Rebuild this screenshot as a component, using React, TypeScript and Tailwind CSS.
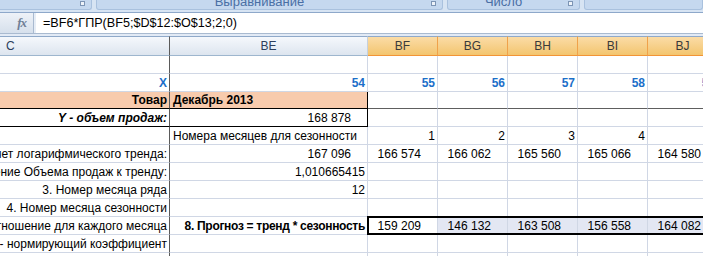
import React from 'react';

type Cell = {
  text?: string;
  align?: 'left' | 'right' | 'fmt';
  cls?: string;
};

const F = "font-['Liberation_Sans',Arial,sans-serif]";

// columns: C (frozen, clipped on the left), BE, BF..BJ
const COLS = ['BF', 'BG', 'BH', 'BI', 'BJ'];

type Row = {
  c?: Cell;
  be?: Cell;
  rest?: (Cell | undefined)[];
  kind?: 'head' | 'box' | 'forecast';
};

const ROWS: Row[] = [
  {},
  {
    c: { text: 'X', align: 'right', cls: 'font-bold text-[#1c6fc9]' },
    be: { text: '54', align: 'right', cls: 'font-bold text-[#1c6fc9]' },
    rest: ['55', '56', '57', '58', '59'].map((t) => ({ text: t, align: 'right' as const, cls: 'font-bold text-[#1c6fc9]' })),
  },
  {
    kind: 'head',
    c: { text: 'Товар', align: 'right', cls: 'font-bold' },
    be: { text: 'Декабрь 2013', align: 'left', cls: 'font-bold' },
  },
  {
    kind: 'box',
    c: { text: 'Y - объем продаж:', align: 'right', cls: 'font-bold italic' },
    be: { text: '168 878', align: 'fmt' },
  },
  {
    be: { text: 'Номера месяцев для сезонности', align: 'left' },
    rest: ['1', '2', '3', '4'].map((t) => ({ text: t, align: 'right' as const })),
  },
  {
    c: { text: '1. Расчет логарифмического тренда:', align: 'right' },
    be: { text: '167 096', align: 'fmt' },
    rest: ['166 574', '166 062', '165 560', '165 066', '164 580'].map((t) => ({ text: t, align: 'fmt' as const })),
  },
  {
    c: { text: '2. Отношение Объема продаж к тренду:', align: 'right' },
    be: { text: '1,010665415', align: 'right' },
  },
  {
    c: { text: '3. Номер месяца ряда', align: 'right' },
    be: { text: '12', align: 'right' },
  },
  {
    c: { text: '4. Номер месяца сезонности', align: 'right' },
  },
  {
    kind: 'forecast',
    c: { text: '5. Среднее отношение для каждого месяца', align: 'right' },
    be: { text: '8. Прогноз = тренд * сезонность', align: 'right', cls: 'font-bold tracking-[-0.3px]' },
    rest: ['159 209', '146 132', '163 508', '156 558', '164 082'].map((t) => ({ text: t, align: 'fmt' as const })),
  },
  {
    c: { text: '7. Kн - нормирующий коэффициент', align: 'right' },
  },
  {},
];

function CellText({ cell }: { cell?: Cell }) {
  if (!cell || !cell.text) return null;
  const pos =
    cell.align === 'left'
      ? 'justify-start pl-[3px]'
      : cell.align === 'fmt'
      ? 'justify-end pr-[16px]'
      : 'justify-end pr-[2px]';
  return (
    <div className={`absolute inset-0 flex items-center ${pos}`}>
      <span className={`shrink-0 whitespace-nowrap ${cell.cls ?? ''}`}>{cell.text}</span>
    </div>
  );
}

function Ribbon() {
  return (
    <div className="h-[13px] bg-[#d7e4f3] border-b border-[#8ea8ca] flex gap-[4px] overflow-hidden">
      <div className="relative w-[97px] -ml-[4px] h-[10px] rounded-b-[3px] bg-[#c5d8ef] border border-t-0 border-[#a9c1de]">
        <div className="absolute right-[6px] top-[1px] w-[5px] h-[5px] border border-[#7d95b5] bg-[#eef3f9]" />
      </div>
      <div className="relative w-[351px] h-[10px] rounded-b-[3px] bg-[#c5d8ef] border border-t-0 border-[#a9c1de] flex justify-center overflow-hidden">
        <span className="text-[13px] leading-none -mt-[5px] pr-[20px] text-[#4a6fa5]">Выравнивание</span>
        <div className="absolute right-[6px] top-[1px] w-[5px] h-[5px] border border-[#7d95b5] bg-[#eef3f9]" />
      </div>
      <div className="relative w-[135px] h-[10px] rounded-b-[3px] bg-[#c5d8ef] border border-t-0 border-[#a9c1de] flex justify-center overflow-hidden">
        <span className="text-[13px] leading-none -mt-[5px] pr-[20px] text-[#4a6fa5]">Число</span>
        <div className="absolute right-[6px] top-[1px] w-[5px] h-[5px] border border-[#7d95b5] bg-[#eef3f9]" />
      </div>
      <div className="w-[120px] h-[10px] rounded-b-[3px] bg-[#c5d8ef] border border-t-0 border-[#a9c1de]" />
    </div>
  );
}

function FormulaBar() {
  return (
    <div className="h-[21px] flex bg-white border-b border-[#a9bad0]">
      <div className="w-[34px] bg-gradient-to-b from-[#eef2f8] to-[#d6e0ec] border-r border-[#a9bad0] flex items-center justify-end pr-[7px]">
        <span className="font-['Liberation_Serif',serif] italic font-bold text-[13px] text-[#6f7f97] tracking-[-1px]">fx</span>
      </div>
      <div className="w-[2px] bg-[#e6edf6]" />
      <div className="flex-1 flex items-center pl-[7px] text-[12.6px] text-black">
        =BF6*ГПР(BF5;$D$12:$O$13;2;0)
      </div>
    </div>
  );
}

function Header() {
  return (
    <div className="h-[22px] flex border-t-[2px] border-[#e2eaf5] text-[12px] text-[#2c3f5c]">
      <div className="w-[170px] shrink-0 h-full bg-gradient-to-b from-[#f5f8fc] to-[#dde5ef] border-b border-[#9eb6ce] border-t border-t-[#8fa9c9] border-r border-r-[#5a5a5a] flex items-center pl-[6px]">
        C
      </div>
      <div className="w-[198px] shrink-0 h-full bg-gradient-to-b from-[#f5f8fc] to-[#dde5ef] border-b border-[#9eb6ce] border-t border-t-[#8fa9c9] border-r border-r-[#c6d0dc] flex items-center justify-center">
        BE
      </div>
      {COLS.map((c) => (
        <div
          key={c}
          className="w-[70px] shrink-0 h-full bg-gradient-to-b from-[#fbdca6] to-[#f3c56e] border-b border-[#f29436] border-t border-t-[#8fa9c9] border-r border-r-[#f0a24a] flex items-center justify-center text-[#3a3a3a]"
        >
          {c}
        </div>
      ))}
    </div>
  );
}

function GridRow({ row }: { row: Row }) {
  const head = row.kind === 'head';
  const box = row.kind === 'box';
  const fc = row.kind === 'forecast';
  const bottomLeft = head || box ? 'border-b-black' : 'border-b-[#d0d7e5]';
  const bottomRight = head ? 'border-b-[#5e5e5e]' : 'border-b-[#d0d7e5]';
  return (
    <div className={`h-[18px] flex ${head ? 'border-t border-black -mt-px' : ''}`}>
      <div className={`relative w-[170px] shrink-0 overflow-hidden border-b border-r border-r-[#5a5a5a] ${bottomLeft} ${head ? 'bg-[#f8cbad]' : ''}`}>
        <CellText cell={row.c} />
      </div>
      <div
        className={`relative w-[198px] shrink-0 overflow-hidden border-b ${bottomLeft} border-r ${
          head || box ? 'border-r-black' : 'border-r-[#d0d7e5]'
        } ${head ? 'bg-[#f8cbad]' : ''}`}
      >
        <CellText cell={row.be} />
      </div>
      {fc ? (
        <div className="relative flex shrink-0 -ml-px -mt-px h-[19px] border-[2px] border-black bg-white">
          {COLS.map((c, i) => (
            <div
              key={c}
              className={`relative shrink-0 h-full border-r border-[#d0d7e5] ${i === 0 ? 'w-[69px] bg-white' : 'w-[70px] bg-[#e3e7f3]'}`}
            >
              <CellText cell={row.rest?.[i]} />
            </div>
          ))}
        </div>
      ) : (
        COLS.map((c, i) => (
          <div key={c} className={`relative w-[70px] shrink-0 border-b ${bottomRight} border-r border-r-[#d0d7e5]`}>
            <CellText cell={row.rest?.[i]} />
          </div>
        ))
      )}
    </div>
  );
}

export default function App() {
  return (
    <div className={`w-[703px] h-[256px] overflow-hidden bg-white ${F} text-[12px] text-black`}>
      <Ribbon />
      <FormulaBar />
      <Header />
      <div>
        {ROWS.map((r, i) => (
          <GridRow key={i} row={r} />
        ))}
      </div>
    </div>
  );
}
